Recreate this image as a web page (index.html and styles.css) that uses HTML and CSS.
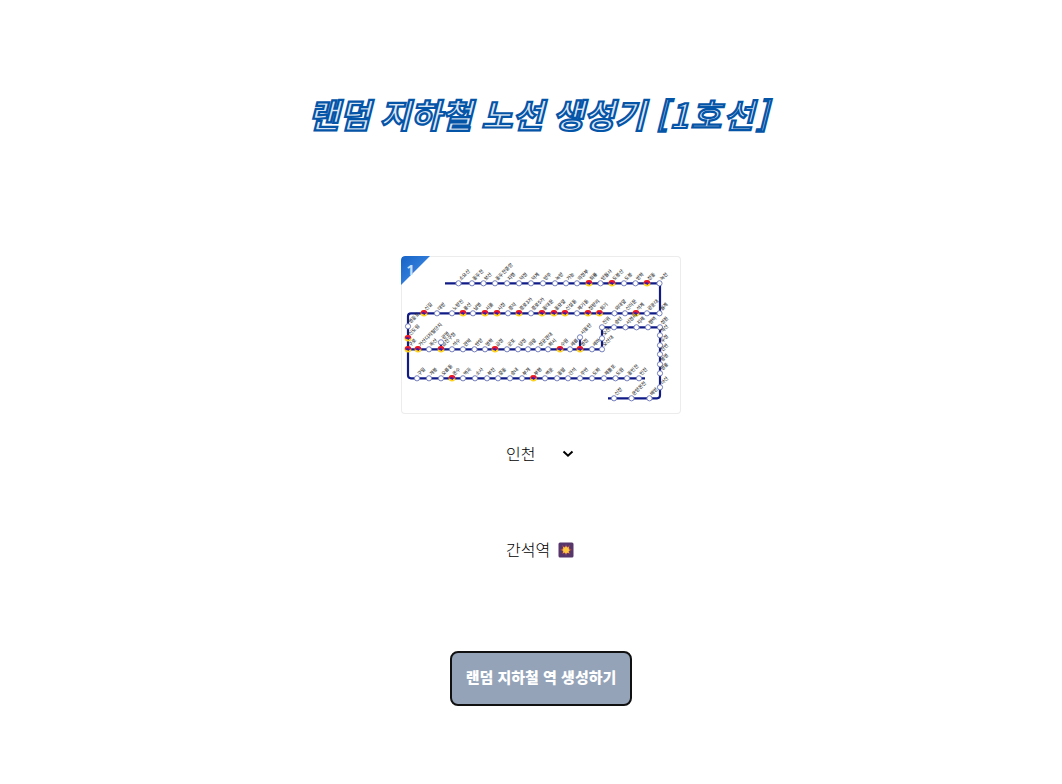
FILE: index.html
```
<!DOCTYPE html>
<html lang="ko">
<head>
<meta charset="utf-8">
<title>랜덤 지하철 노선 생성기</title>
<link rel="stylesheet" href="styles.css">
</head>
<body>
<main class="page">
  <h1 class="title">랜덤 지하철 노선 생성기 <span class="line-label">[1호선]</span></h1>
  <svg class="map" viewBox="401 256 280 158" role="img" aria-label="1호선 노선도">
    <defs>
      <linearGradient id="corner" x1="0" y1="0" x2="1" y2="1"><stop offset="0" stop-color="#1763c6"/><stop offset=".5" stop-color="#2f7bd9"/></linearGradient>
      <g id="transfer"><circle r="3.3" fill="#ffd21c"/><path d="M-3.3 0A3.3 3.3 0 0 1 0-3.3L1 0L-1 1Z" fill="#f01225"/><path d="M0-3.3A3.3 3.3 0 0 1 3.3 0L0 1Z" fill="#e01240"/><path d="M-2.6-.2L-.6-1.2L1.8 0L.4 1.8L-1 .8Z" fill="#3020b0"/></g>
    </defs>
    <path d="M401 260q0-4 4-4h25l-29 29z" fill="url(#corner)"/>
    <text class="line-number" x="406.5" y="275">1</text>
    <g transform="translate(0 .3)">
      <g class="track">
        <path d="M445 283H660V313H411Q408 313 408 316V375Q408 378 411 378H645"/>
        <path d="M408 349H602V327H660V395Q660 398 657 398H608"/>
        <path d="M441 349V342M580 349V337"/>
      </g>
      <g id="stations"></g>
    </g>
  </svg>
  <label class="picker">
    <select class="select"><option>인천</option></select>
    <svg class="chevron" viewBox="0 0 12 8"><path d="M1.5 1.5L6 5.7L10.5 1.5"/></svg>
  </label>
  <p class="result"><span>간석역</span>
    <svg class="spark" viewBox="0 0 16 16"><rect x=".5" y=".5" width="15" height="15" rx="1.5" fill="#56366b"/><path d="M8 2l1 3 3-2-1 3 3 2-3 1 1 3-3-1-1 3-1-3-3 1 1-3-3-1 3-2-1-3 3 2z" fill="#a84a55"/><path d="M8 4l1.2 1.5L11 5l-.3 2L12 8.2l-1.4 1L11 11l-2-.3L8 12l-1.2-1.4L5 11l.3-2L4 8l1.3-1L5 5l1.9.5z" fill="#ffc83d"/></svg>
  </p>
  <button class="generate">랜덤 지하철 역 생성하기</button>
</main>
<script src="map.js"></script>
</body>
</html>
```
FILE: map.js
```
// Each entry: name, x, y; a trailing * marks a transfer station.
const stations = `소요산 458.5 283,동두천 472 283,보산 483.5 283,동두천중앙 495 283,지행 507 283,덕정 519 283,덕계 531 283,양주 543 283,녹양 555 283,가능 566 283,의정부 577 283,회룡 589 283 *,망월사 600.5 283,도봉산 612 283 *,도봉 624 283,방학 635.5 283,창동 647 283 *,녹천 659.5 283,
월계 659.5 313,광운대 647 313,석계 636 313 *,신이문 625 313,외대앞 614.5 313,회기 599.5 313 *,청량리 588 313 *,제기동 577 313,신설동 565 313 *,동묘앞 554 313 *,동대문 542 313 *,종로5가 531 313,종로3가 519 313 *,종각 508 313,시청 497 313 *,서울 485 313 *,남영 473 313,용산 463 313 *,노량진 452 313,대방 437 313,신길 424 313 *,
영등포 408 326,신도림 408 338 *,구로 408 349 *,가산디지털단지 418 349 *,독산 429 349,금천구청 441 349 *,광명 441 342,석수 452 349,관악 463 349,안양 474.5 349,명학 485 349,금정 495 349 *,군포 507 349,당정 518 349,의왕 528 349,성균관대 538 349,화서 548 349,수원 560 349 *,세류 570 349,병점 580 349 *,서동탄 580 337,세마 592 349,오산대 602 349,오산 602 338,진위 602 327,송탄 614 327,서정리 625.5 327,지제 636.5 327,평택 648 327,성환 660 327,
직산 660 335,두정 660 345,천안 660 354,봉명 660 364,쌍용 660 373,아산 660 387,배방 649.5 398,온양온천 631.5 398,신창 614 398,
구일 417 378,개봉 429 378,오류동 441 378,온수 452 378 *,역곡 463 378,소사 475 378,부천 487 378,중동 498 378,송내 510 378,부개 522 378,부평 533.5 378 *,백운 545 378,동암 557 378,간석 568 378,주안 580 378,도화 592 378,제물포 604 378,도원 615.5 378,동인천 627 378,인천 639 378`;

document.getElementById('stations').innerHTML = stations.split(',').map(entry => {
  const [name, x, y, transfer] = entry.trim().split(' ');
  const dot = transfer
    ? `<use href="#transfer" x="${x}" y="${y}"/>`
    : `<circle class="stop" cx="${x}" cy="${y}" r="2.6"/>`;
  return `${dot}<text class="station" transform="translate(${+x + 2.5} ${y - 2.5}) rotate(-45)">${name}</text>`;
}).join('');
```
FILE: styles.css
```
body {
  margin: 0;
  background: #fff;
  color: #000;
  font-family: "Noto Sans CJK KR", sans-serif;
}

.page {
  display: flex;
  flex-direction: column;
  align-items: center;
  box-sizing: border-box;
  height: 784px;
  padding: 84px 0 0 20px;
}

.title {
  margin: 0 4px 112px 0;
  font-size: 33.6px;
  line-height: 60px;
  font-weight: 700;
  font-style: italic;
  white-space: nowrap;
  color: #dbe8f4;
  -webkit-text-stroke: 2.2px #0454a8;
}

.line-label {
  margin-left: 1px;
  font-weight: 500;
  letter-spacing: 1.8px;
}

.map {
  flex: none;
  box-sizing: border-box;
  width: 280px;
  height: 158px;
  border-radius: 4px;
  box-shadow: inset 0 0 0 1px #ececec;
}

.line-number {
  font: 700 14px "Open Sans", sans-serif;
  fill: #c8e0fa;
}

.track {
  fill: none;
  stroke: #101b88;
  stroke-width: 2.2;
}

.stop {
  fill: #fff;
  stroke: #6673b5;
  stroke-width: 0.9;
}

.station {
  font-size: 4.8px;
  font-weight: 500;
  fill: #333;
}

.picker {
  display: flex;
  align-items: center;
  justify-content: space-between;
  width: 68px;
  height: 24px;
  margin: 28px 2px 0 0;
}

.select {
  appearance: none;
  padding: 0 0 1px;
  border: 0;
  background: none;
  color: #000;
  font: 300 16px/23px "Noto Sans CJK KR", sans-serif;
}

.chevron {
  width: 12px;
  height: 8px;
  fill: none;
  stroke: #000;
  stroke-width: 2;
}

.result {
  display: flex;
  align-items: center;
  justify-content: space-between;
  width: 68px;
  height: 24px;
  margin: 72px 2px 0 0;
  font-size: 16px;
  line-height: 22px;
  font-weight: 300;
  white-space: nowrap;
}

.result span {
  padding-bottom: 2px;
}

.spark {
  width: 16px;
  height: 16px;
}

.generate {
  width: 182px;
  height: 55px;
  margin-top: 89px;
  padding: 0 0 4px;
  border: 2px solid #111;
  border-radius: 8px;
  background: #94a3b8;
  color: #fff;
  font: 900 15px "Noto Sans CJK KR", sans-serif;
  white-space: nowrap;
}
```
